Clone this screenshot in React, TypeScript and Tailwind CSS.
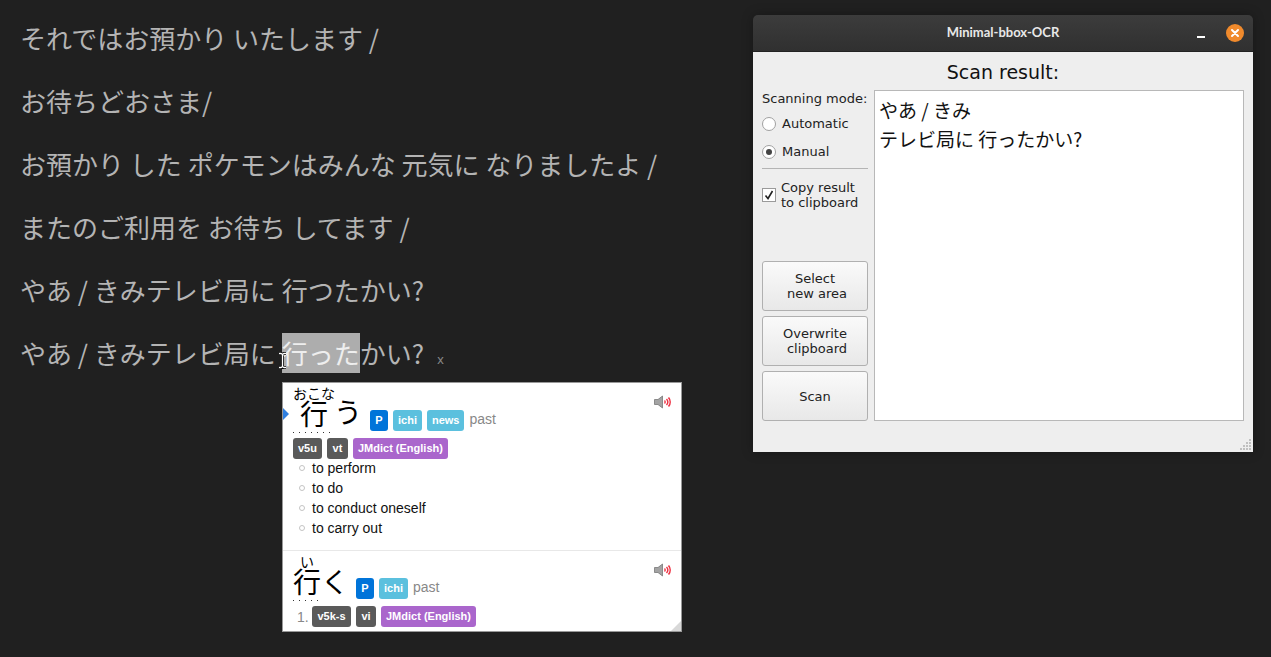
const jp = "font-['Noto_Sans_CJK_JP',sans-serif]"
const dots = "absolute h-[1px] bg-[repeating-linear-gradient(90deg,#333333_0,#333333_1px,transparent_1px,transparent_6px)]"

function Speaker() {
  return (
    <svg width="17" height="14" viewBox="0 0 17 14" className="block">
      <path d="M0.500 4.500h3.500l4.500-3.500v12l-4.500-3.500h-3.500z" fill="#a3a3a3" stroke="#777" strokeWidth="0.8" />
      <path d="M10.500 5.500a2 2 0 0 1 0 3" fill="none" stroke="#ee3344" strokeWidth="1.4" />
      <path d="M12.500 4a4.500 4.500 0 0 1 0 6" fill="none" stroke="#ee3344" strokeWidth="1.4" />
      <path d="M14.500 2.500a7 7 0 0 1 0 9" fill="none" stroke="#ee3344" strokeWidth="1.6" />
    </svg>
  )
}

function Tag({ color, size = "px-[5px]", children }: { color: string; size?: string; children: string }) {
  return (
    <span className={`inline-flex h-[21px] items-center justify-center rounded-[3px] text-[11px] font-bold leading-none text-white ${size} ${color}`}>
      {children}
    </span>
  )
}

function Entry() {
  return (
    <div className="relative h-[168px] border-b border-[#e8e8e8] pl-[10px]">
      {/* current entry marker */}
      <div className="absolute left-0 top-[25px] h-0 w-0 border-y-[6px] border-l-[6px] border-y-transparent border-l-[#2f7fe0]" />
      <div className="absolute right-[10px] top-[12px]"><Speaker /></div>
      <div className="flex h-[50px] items-end">
        <div className="relative flex h-[50px] w-[67px] items-end whitespace-nowrap">
          <span className={`absolute left-0 top-[1px] text-[14px] leading-[18px] text-black ${jp}`}>おこな</span>
          <span className={`ml-[7px] pb-[2px] text-[28px] leading-[36px] text-black ${jp}`}>行</span>
          <span className={`pb-[4px] pl-[6px] text-[28px] leading-[36px] text-black ${jp}`}>う</span>
          <div className={`${dots} bottom-0 left-0 w-[42px]`} />
        </div>
        <div className="mb-[2px] ml-[10px] flex items-center gap-[5px]">
          <Tag color="bg-[#0074d9]" size="w-[18px]">P</Tag>
          <Tag color="bg-[#5bc0de]">ichi</Tag>
          <Tag color="bg-[#5bc0de]">news</Tag>
          <span className="-mt-[3px] text-[14px] leading-[21px] text-[#888888]">past</span>
        </div>
      </div>
      <div className="mt-[5px] flex gap-[5px]">
        <Tag color="bg-[#5a5a5a]">v5u</Tag>
        <Tag color="bg-[#5a5a5a]" size="w-[21px]">vt</Tag>
        <Tag color="bg-[#aa66cc]">JMdict (English)</Tag>
      </div>
      <ul className="-mt-[1px]">
        {["to perform", "to do", "to conduct oneself", "to carry out"].map((s) => (
          <li key={s} className="flex h-[20px] items-center text-[14px] text-[#111111]">
            <span className="ml-[6px] mr-[7px] h-[6px] w-[6px] rounded-full border border-[#c4c4c4]" />
            {s}
          </li>
        ))}
      </ul>
    </div>
  )
}

function SecondEntry() {
  return (
    <div className="relative pl-[10px]">
      <div className="absolute right-[10px] top-[12px]"><Speaker /></div>
      <div className="flex h-[50px] items-end">
        <div className="relative flex h-[50px] w-[63px] items-end whitespace-nowrap">
          <span className={`absolute left-[7px] top-[1px] text-[14px] leading-[18px] text-black ${jp}`}>い</span>
          <span className={`pb-[2px] text-[28px] leading-[36px] text-black ${jp}`}>行く</span>
          <div className={`${dots} bottom-0 left-0 w-[30px]`} />
        </div>
        <div className="mb-[2px] flex items-center gap-[5px]">
          <Tag color="bg-[#0074d9]" size="w-[18px]">P</Tag>
          <Tag color="bg-[#5bc0de]">ichi</Tag>
          <span className="-mt-[3px] text-[14px] leading-[21px] text-[#888888]">past</span>
        </div>
      </div>
      <div className="mt-[5px] flex items-center gap-[5px]">
        <span className="ml-[4px] w-[10px] text-[14px] leading-[18px] text-[#888888]">1.</span>
        <Tag color="bg-[#5a5a5a]" size="w-[39px]">v5k-s</Tag>
        <Tag color="bg-[#5a5a5a]" size="w-[20px]">vi</Tag>
        <Tag color="bg-[#aa66cc]">JMdict (English)</Tag>
      </div>
    </div>
  )
}

function Popup() {
  return (
    <div className="absolute left-[282px] top-[382px] h-[250px] w-[400px] overflow-hidden border border-[#999999] bg-white font-['Liberation_Sans',sans-serif]">
      <Entry />
      <SecondEntry />
      {/* resize corner */}
      <div className="absolute bottom-0 right-0 h-0 w-0 border-b-[10px] border-l-[10px] border-b-[#d8d8d8] border-l-transparent" />
    </div>
  )
}

function Radio({ label, checked }: { label: string; checked?: boolean }) {
  return (
    <div className="flex h-[28px] items-center gap-[6px]">
      <span className="flex h-[14px] w-[14px] items-center justify-center rounded-full border border-[#a0a0a0] bg-white">
        {checked && <span className="h-[6px] w-[6px] rounded-full bg-[#444444]" />}
      </span>
      <span>{label}</span>
    </div>
  )
}

function WinButton({ first, second }: { first: string; second?: string }) {
  return (
    <div className="flex h-[50px] w-[106px] flex-col items-center justify-center rounded-[3px] border border-[#b0b0b0] bg-gradient-to-b from-[#fafafa] to-[#e8e8e8] leading-[15px] text-[#222222]">
      <span>{first}</span>
      {second && <span className="pl-[4px]">{second}</span>}
    </div>
  )
}

function ScanWindow() {
  return (
    <div className="absolute left-[753px] top-[15px] flex h-[437px] w-[500px] flex-col overflow-hidden rounded-t-[5px] font-['DejaVu_Sans',sans-serif] text-[13px] text-[#222222] shadow-[0_0_12px_rgba(0,0,0,0.3)]">
      <div className="relative flex h-[37px] shrink-0 items-center justify-center border-b border-[#222222] bg-gradient-to-b from-[#3c3c3c] to-[#303030]">
        <span className="font-['Lato',sans-serif] text-[13px] font-bold text-[#e8e8e8]">Minimal-bbox-OCR</span>
        <div className="absolute left-[444px] top-[21px] h-[2px] w-[8px] bg-white" />
        <div className="absolute left-[473px] top-[9px] flex h-[18px] w-[18px] items-center justify-center rounded-full bg-[#f08a2c]">
          <svg width="10" height="10" viewBox="0 0 10 10">
            <path d="M2 2l6 6M8 2l-6 6" stroke="#fff" strokeWidth="2" strokeLinecap="round" />
          </svg>
        </div>
      </div>
      <div className="relative flex-1 bg-[#eeeeee]">
        <div className="pt-[9px] text-center text-[19px] leading-[22px] text-[#111111]">Scan result:</div>
        <div className="flex gap-[6px] pl-[9px] pt-[7px]">
          <div className="flex w-[106px] flex-col">
            <div className="mt-[1px] h-[16px] whitespace-nowrap leading-[16px]">Scanning mode:</div>
            <div className="mt-[3px]">
              <Radio label="Automatic" />
              <Radio label="Manual" checked />
            </div>
            <div className="mt-[2px] border-t border-[#b4b4b4]" />
            <div className="mt-[11px] flex items-start gap-[5px] leading-[15px]">
              <span className="mt-[8px] flex h-[14px] w-[14px] items-center justify-center border border-[#9a9a9a] bg-white">
                <svg width="10" height="10" viewBox="0 0 10 10">
                  <path d="M1.500 5.500l2.500 3 4.500-7.500" fill="none" stroke="#222" strokeWidth="1.6" />
                </svg>
              </span>
              <span>Copy result<br />to clipboard</span>
            </div>
            <div className="mt-[51px] flex flex-col gap-[5px]">
              <WinButton first="Select" second="new area" />
              <WinButton first="Overwrite" second="clipboard" />
              <WinButton first="Scan" />
            </div>
          </div>
          <div className={`h-[331px] w-[370px] border border-[#b8b8b8] bg-white px-[4px] py-[4px] ${jp} text-[19px] leading-[29px] text-[#111111]`}>
            <div>やあ / きみ</div>
            <div>テレビ局に 行ったかい?</div>
          </div>
        </div>
        {/* size grip */}
        <div className="absolute bottom-[2px] right-[2px] grid grid-cols-4 gap-[1px]">
          {[0, 0, 0, 1, 0, 0, 1, 1, 0, 1, 1, 1, 1, 1, 1, 1].map((on, i) => (
            <span key={i} className={on ? "h-[2px] w-[2px] bg-[#c0c0c0]" : "h-[2px] w-[2px]"} />
          ))}
        </div>
      </div>
    </div>
  )
}

const lines = [
  "それではお預かり いたします /",
  "お待ちどおさま/",
  "お預かり した ポケモンはみんな 元気に なりましたよ /",
  "またのご利用を お待ち してます /",
  "やあ / きみテレビ局に 行つたかい?",
]

export default function App() {
  return (
    <div className={`relative h-[657px] w-[1271px] overflow-hidden bg-[#202020] ${jp}`}>
      <div className="flex flex-col gap-[23px] pl-[20px] pt-[18px] text-[26px] leading-[40px] text-[#b4b4b4]">
        {lines.map((l) => (
          <div key={l}>{l}</div>
        ))}
        <div className="flex items-center">
          <span>やあ / きみテレビ局に</span>
          <span className="ml-[6px] bg-[#adadad] text-[#eeeeee]">行った</span>
          <span>かい?</span>
          <span className="ml-[13px] mt-[12px] font-['Liberation_Sans',sans-serif] text-[13px] leading-none text-[#888888]">x</span>
        </div>
      </div>
      {/* I-beam cursor */}
      <svg width="9" height="17" viewBox="0 0 9 17" className="absolute left-[278px] top-[352px]">
        <path d="M1 1.500h2l1.500 1 1.500-1h2M4.500 2.500v12M1 15.500h2l1.500-1 1.500 1h2" fill="none" stroke="#000" strokeWidth="3" />
        <path d="M1 1.500h2l1.500 1 1.500-1h2M4.500 2.500v12M1 15.500h2l1.500-1 1.500 1h2" fill="none" stroke="#fff" strokeWidth="1.400" />
      </svg>
      <Popup />
      <ScanWindow />
    </div>
  )
}
